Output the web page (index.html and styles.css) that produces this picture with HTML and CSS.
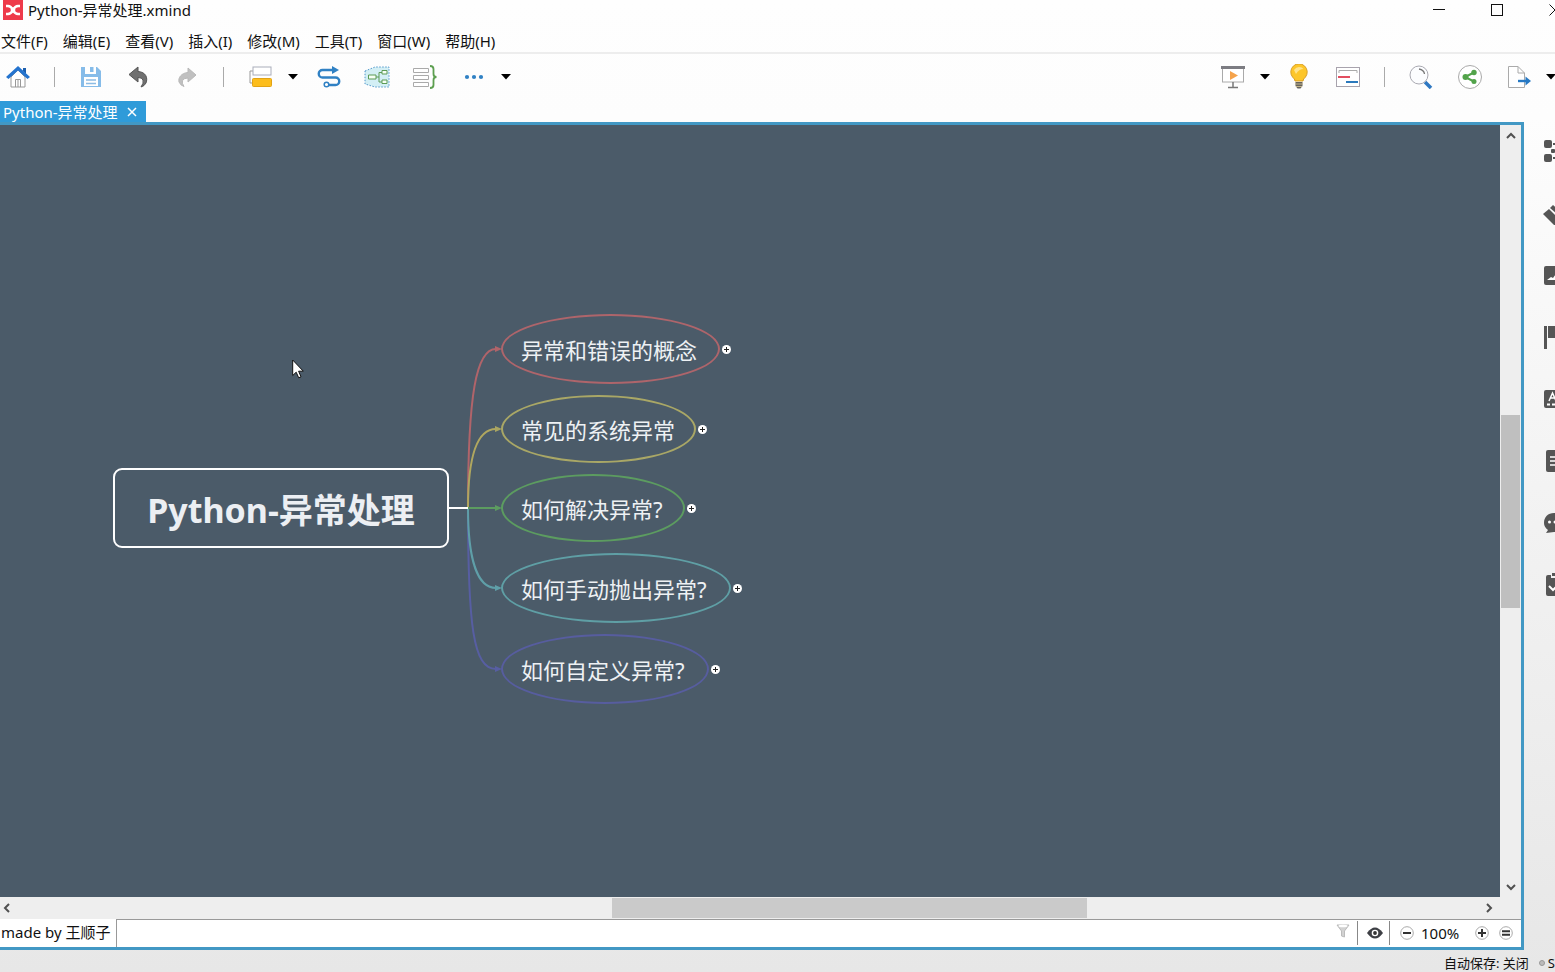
FILE: index.html
```html
<!DOCTYPE html>
<html lang="zh-CN">
<head>
<meta charset="utf-8">
<title>Python-异常处理.xmind</title>
<link rel="stylesheet" href="styles.css">
</head>
<body>
<header class="titlebar">
  <svg class="app-logo" viewBox="0 0 20 20" aria-hidden="true"><rect width="20" height="20" fill="#ee3a4a"/><path d="M3 6H5Q8 6 10 10Q12 14 15 14H17M3 14H5Q8 14 10 10Q12 6 15 6H17" fill="none" stroke="#fff" stroke-width="2.600"/><circle cx="10" cy="10" r="2.400" fill="#fff"/></svg>
  <span class="app-title">Python-异常处理.xmind</span>
  <div class="window-buttons">
    <button aria-label="最小化"><svg width="12" height="12" viewBox="0 0 12 12"><path d="M0 5.500H12" stroke="#111"/></svg></button>
    <button aria-label="最大化"><svg width="12" height="12" viewBox="0 0 12 12"><rect x=".5" y=".5" width="11" height="11" fill="none" stroke="#111"/></svg></button>
    <button aria-label="关闭"><svg width="12" height="12" viewBox="0 0 12 12"><path d="M.5 .5L11.500 11.500M11.500 .5L.5 11.500" stroke="#111"/></svg></button>
  </div>
</header>
<nav class="menubar">
  <button>文件(F)</button><button>编辑(E)</button><button>查看(V)</button><button>插入(I)</button><button>修改(M)</button><button>工具(T)</button><button>窗口(W)</button><button>帮助(H)</button>
</nav>
<div class="toolbar">
  <div class="tools">
    <button class="tool" aria-label="主页"><svg width="24" height="24" viewBox="0 0 24 24"><path d="M5 12V22H19V12L12 5Z" fill="#fff" stroke="#999"/><path d="M9.500 22V14.500H14.500V22M12 14.500V22" fill="none" stroke="#999"/><path d="M17 3H20V9L17 6Z" fill="#1c5fae"/><path d="M0 12L12 1L24 12L21.500 14L12 5.500L2.500 14Z" fill="#2474cf"/></svg></button>
    <span class="sep"></span>
    <button class="tool" aria-label="保存"><svg width="22" height="22" viewBox="0 0 22 22"><path d="M1 1H17L21 5V21H1Z" fill="#86bce9"/><path d="M5 1H16V8H5Z" fill="#fff"/><path d="M10 1H13.500V6H10Z" fill="#86bce9"/><path d="M4 11H18V20H4Z" fill="#fff"/><path d="M6 14H16M6 17.500H16" stroke="#8dbce4" stroke-width="1.500"/></svg></button>
    <button class="tool" aria-label="撤销"><svg width="22" height="22" viewBox="0 0 22 22"><path d="M10 1V5.500C18 6 20 12 18 17Q16.500 20 13 21Q16 17 15 14Q14 11.500 10 11.500V16L1 8.500Z" fill="#707070" stroke="#555"/></svg></button>
    <button class="tool" aria-label="重做"><svg width="20" height="22" viewBox="0 0 20 22"><path d="M11 2V6.500C4 7 1 12 2 16Q3.500 19.500 7 20.500Q4.500 17 5.500 14.500Q7 12 11 12V16L19 9Z" fill="#c0c0c0" stroke="#b8b8b8"/></svg></button>
    <span class="sep"></span>
    <div class="split topic">
      <button class="tool" aria-label="插入主题"><svg width="24" height="22" viewBox="0 0 24 22"><path d="M4 5H1V17H4" fill="none" stroke="#999"/><rect x="4" y="1" width="18" height="8" fill="#fff" stroke="#a9adba"/><rect x="3.500" y="12.500" width="19" height="8" rx="1" fill="#fcbd1c" stroke="#e2a315"/></svg></button>
      <button class="caret" aria-label="更多主题"><svg width="10" height="6" viewBox="0 0 10 6"><path d="M0 0H10L5 5.500Z"/></svg></button>
    </div>
    <button class="tool" aria-label="联系"><svg width="24" height="24" viewBox="0 0 24 24"><path d="M15 5H5.500A3.700 3.700 0 0 0 5.500 12.500H18.500A3.700 3.700 0 0 1 18.500 20H11" fill="none" stroke="#3081c4" stroke-width="2.400"/><path d="M15 1L22 5L15 9Z" fill="#3081c4"/><circle cx="9.500" cy="19.500" r="2.300" fill="#fff" stroke="#3081c4" stroke-width="1.500"/></svg></button>
    <button class="tool" aria-label="外框"><svg width="26" height="22" viewBox="0 0 26 22"><path d="M1 5L11 1H25V21H11L1 18Z" fill="#d3eff5" stroke="#5599cc" stroke-dasharray="1.500 1.500"/><path d="M12 11H15M18 6.500H15V16H18" fill="none" stroke="#5d9b56"/><path d="M4.500 9H12V13H4.500ZM18 4.500H23V8H18ZM18 14H23V17.500H18Z" fill="#f5fff5" stroke="#5d9b56"/></svg></button>
    <button class="tool" aria-label="概要"><svg width="24" height="24" viewBox="0 0 24 24"><path d="M.5 3.500H15.500V7.500H.5ZM.5 10.500H15.500V14.500H.5ZM.5 17.500H15.500V21.500H.5Z" fill="#fff" stroke="#aaa"/><path d="M17 1Q20.500 1 20.500 4V9Q20.500 12 23.500 12Q20.500 12 20.500 15V20Q20.500 23 17 23" fill="none" stroke="#5d9f50" stroke-width="1.800"/></svg></button>
    <div class="split more">
      <button class="tool" aria-label="更多"><svg width="20" height="6" viewBox="0 0 20 6" fill="#3081c4"><circle cx="3" cy="3" r="2.100"/><circle cx="10" cy="3" r="2.100"/><circle cx="17" cy="3" r="2.100"/></svg></button>
      <button class="caret" aria-label="展开更多"><svg width="10" height="6" viewBox="0 0 10 6"><path d="M0 0H10L5 5.500Z"/></svg></button>
    </div>
  </div>
  <div class="tools right">
    <div class="split">
      <button class="tool" aria-label="演示"><svg width="24" height="24" viewBox="0 0 24 24"><rect x="1.500" y="3" width="21" height="14" fill="#fff" stroke="#aaa"/><path d="M0 1H24V4H0Z" fill="#7c7c82"/><path d="M12 17V22M7 22.500H17" stroke="#777" stroke-width="1.500"/><path d="M9 6L17 10.500L9 15Z" fill="#f5a34b"/></svg></button>
      <button class="caret" aria-label="演示选项"><svg width="10" height="6" viewBox="0 0 10 6"><path d="M0 0H10L5 5.500Z"/></svg></button>
    </div>
    <button class="tool" aria-label="头脑风暴"><svg width="20" height="26" viewBox="0 0 20 26"><path d="M6 17Q6 15 3.500 13A8.200 8.200 0 1 1 16.500 13Q14 15 14 17Z" fill="#fdc62a" stroke="#d99f28"/><path d="M5 6Q7 3 10 3Q13 3 14.500 5Q10 5 7 10Z" fill="#ffe38b"/><path d="M6.500 18H13.500V22L11.500 24.500H8.500L6.500 22Z" fill="#66635c"/><path d="M6 20H14M7 22.500H13" stroke="#c3b68d"/></svg></button>
    <button class="tool" aria-label="甘特图"><svg width="26" height="22" viewBox="0 0 26 22"><rect x="1.500" y="1.500" width="23" height="19" fill="#fff" stroke="#a8a3ad"/><path d="M4 7V4.500H22V7" fill="none" stroke="#aaa"/><path d="M3 11H15" stroke="#e24e60" stroke-width="2"/><path d="M11 16H23" stroke="#2b79bc" stroke-width="2"/></svg></button>
    <span class="sep"></span>
    <button class="tool" aria-label="搜索"><svg width="24" height="24" viewBox="0 0 24 24"><path d="M16 17L22 23" stroke="#2f78c2" stroke-width="3.500"/><circle cx="10" cy="10" r="9" fill="#fcfdff" stroke="#a9a9b1"/><path d="M10 4Q15 5 15.500 9" fill="none" stroke="#777" stroke-width="1.300"/></svg></button>
    <button class="tool" aria-label="分享"><svg width="26" height="26" viewBox="0 0 26 26"><circle cx="13" cy="13" r="11.500" fill="#fff" stroke="#aaa"/><path d="M17 8.500L8 13L17 17.500" fill="none" stroke="#52a34a" stroke-width="2"/><g fill="#52a34a"><circle cx="17" cy="8.500" r="2.700"/><circle cx="8.500" cy="13" r="3"/><circle cx="17" cy="17.500" r="2.500"/></g></svg></button>
    <div class="split last">
      <button class="tool" aria-label="导出"><svg width="24" height="24" viewBox="0 0 24 24"><path d="M1.500 1.500H11L17.500 8V22.500H1.500Z" fill="#fff" stroke="#aaa"/><path d="M11 1.500V8H17.500" fill="none" stroke="#aaa"/><path d="M11 16H20" stroke="#2779c4" stroke-width="2.400"/><path d="M18.500 11.500L24 16L18.500 20.500Z" fill="#2779c4"/></svg></button>
      <button class="caret" aria-label="导出选项"><svg width="10" height="6" viewBox="0 0 10 6"><path d="M0 0H10L5 5.500Z"/></svg></button>
    </div>
  </div>
</div>
<div class="workspace">
  <main class="editor">
    <div class="tabs">
      <div class="tab"><span>Python-异常处理</span><button aria-label="关闭标签"><svg width="10" height="10" viewBox="0 0 10 10"><path d="M1 1L9 9M9 1L1 9" stroke="#fff" stroke-width="1.500"/></svg></button></div>
    </div>
    <div class="frame">
      <div class="view">
        <section class="canvas" aria-label="思维导图">
          <svg class="links" width="760" height="600" viewBox="0 0 760 600" fill="none" stroke-width="2">
            <path d="M468 383C468 500 473 544 496 544" stroke="#575ea2"/>
            <path d="M468 383C468 430 476 463 496 463" stroke="#5f9fa8"/>
            <path d="M468 383C468 270 476 224 496 224" stroke="#b0646a"/>
            <path d="M468 383C468 330 477 304 496 304" stroke="#b0a75f"/>
            <path d="M468 383H496" stroke="#5c9c60"/>
            <path d="M449 383H468" stroke="#fff"/>
            <path d="M495 221L502 224L495 227Z" fill="#b0646a"/>
            <path d="M495 301L502 304L495 307Z" fill="#a9a562"/>
            <path d="M495 380L502 383L495 386Z" fill="#5c9c60"/>
            <path d="M495 460L502 463L495 466Z" fill="#5f9fa8"/>
            <path d="M495 541L502 544L495 547Z" fill="#575ea2"/>
          </svg>
          <div class="root">Python-异常处理</div>
          <div class="node n1">异常和错误的概念<button class="expand" aria-label="展开"></button></div>
          <div class="node n2">常见的系统异常<button class="expand" aria-label="展开"></button></div>
          <div class="node n3">如何解决异常?<button class="expand" aria-label="展开"></button></div>
          <div class="node n4">如何手动抛出异常?<button class="expand" aria-label="展开"></button></div>
          <div class="node n5">如何自定义异常?<button class="expand" aria-label="展开"></button></div>
          <svg class="pointer" width="12" height="20" viewBox="0 0 12 20"><path d="M.7 1V16.500L4.200 13.200L6.700 18.800L9 17.800L6.600 12.200H11.300Z" fill="#fff" stroke="#111"/></svg>
        </section>
        <div class="vscroll">
          <button aria-label="向上滚动"><svg width="10" height="7" viewBox="0 0 10 7"><path d="M1 6L5 2L9 6" /></svg></button>
          <div class="track"><div class="thumb"></div></div>
          <button aria-label="向下滚动"><svg width="10" height="7" viewBox="0 0 10 7"><path d="M1 1L5 5L9 1"/></svg></button>
        </div>
      </div>
      <div class="hscroll">
        <button aria-label="向左滚动"><svg width="7" height="10" viewBox="0 0 7 10"><path d="M6 1L2 5L6 9"/></svg></button>
        <div class="track"><div class="thumb"></div></div>
        <button aria-label="向右滚动"><svg width="7" height="10" viewBox="0 0 7 10"><path d="M1 1L5 5L1 9"/></svg></button>
      </div>
      <div class="sheetbar">
        <button class="sheet">made by 王顺子</button>
        <div class="sheet-tools">
          <button class="filter" aria-label="筛选"><svg width="14" height="16" viewBox="0 0 14 16"><path d="M1 2H13L8.500 8V14L5.500 13V8Z" fill="#d2d2d2" stroke="#bbb"/><ellipse cx="7" cy="3" rx="4.500" ry="1.300" fill="#fff"/></svg></button>
          <button class="eye" aria-label="显示"><svg width="16" height="12" viewBox="0 0 16 12"><path d="M0 6Q8-5 16 6Q8 17 0 6Z" fill="#3d3f44"/><circle cx="8" cy="6" r="3.300" fill="#fff"/><circle cx="8" cy="6" r="1.900" fill="#333"/></svg></button>
          <button class="round" aria-label="缩小"><svg width="14" height="14" viewBox="0 0 14 14"><circle cx="7" cy="7" r="6.300"/><path d="M3 7H11"/></svg></button>
          <span class="zoom">100%</span>
          <button class="round plus" aria-label="放大"><svg width="14" height="14" viewBox="0 0 14 14"><circle cx="7" cy="7" r="6.300"/><path d="M3 7H11M7 3V11"/></svg></button>
          <button class="round" aria-label="实际大小"><svg width="14" height="14" viewBox="0 0 14 14"><circle cx="7" cy="7" r="6.300"/><path d="M3 5.300H11M3 8.700H11"/></svg></button>
        </div>
      </div>
    </div>
  </main>
  <aside class="sidebar">
    <button aria-label="结构"><svg width="24" height="24" viewBox="0 0 24 24"><rect x="1" y="1" width="8" height="8" rx="2"/><rect x="1" y="15" width="8" height="8" rx="2"/><rect x="8" y="10" width="4" height="4" rx="1"/><path d="M10 4H12V6H10ZM10 18H12V20H10ZM14 4H22V7H14ZM14 17H22V20H14Z"/></svg></button>
    <button aria-label="格式"><svg width="24" height="24" viewBox="0 0 24 24"><path d="M0 13L6 8L18 20L13 24H11Z"/><path d="M7 7L10 4L22 14V20Z"/></svg></button>
    <button aria-label="图片"><svg width="24" height="24" viewBox="0 0 24 24"><rect x="1" y="3" width="22" height="19" rx="2"/><path d="M4 17L8 14L10 15L15 8L20 17Z" fill="#fff"/></svg></button>
    <button aria-label="图标"><svg width="24" height="24" viewBox="0 0 24 24"><path d="M1 1H4V24H1ZM5 1H23V13H5Z"/></svg></button>
    <button aria-label="文字样式"><svg width="24" height="24" viewBox="0 0 24 24"><rect x="1" y="3" width="22" height="18" rx="2"/><path d="M6 14L9.500 6L13 14M7 11H12" fill="none" stroke="#fff" stroke-width="1.500"/><path d="M4 17.500H7M9 17.500H13" stroke="#fff" stroke-width="2"/></svg></button>
    <button aria-label="备注"><svg width="24" height="24" viewBox="0 0 24 24"><rect x="3" y="1" width="18" height="22" rx="2"/><path d="M7 8H18M7 12H18M7 16H18" stroke="#fff" stroke-width="1.500"/></svg></button>
    <button aria-label="批注"><svg width="24" height="24" viewBox="0 0 24 24"><path d="M11 2C21 2 22 11 22 12C22 19 16 21 11 21L3 22L5 19Q1 16 1 12C1 6 5 2 11 2Z"/><circle cx="6.500" cy="11" r="1.500" fill="#fff"/><circle cx="12" cy="11" r="1.500" fill="#fff"/></svg></button>
    <button aria-label="任务"><svg width="24" height="24" viewBox="0 0 24 24"><path d="M5 2H8V5H16V2H19Q21 2 21 4V21Q21 23 19 23H5Q3 23 3 21V4Q3 2 5 2Z"/><path d="M9 0H15V3H9Z"/><path d="M6 13L10 17L18 9" fill="none" stroke="#fff" stroke-width="2"/></svg></button>
  </aside>
</div>
<footer class="statusbar"><span class="autosave">自动保存: 关闭</span><span class="dot"></span><span class="account">S</span></footer>
</body>
</html>
```
FILE: styles.css
```css
* { box-sizing: border-box; }

body {
  margin: 0;
  height: 100vh;
  display: flex;
  flex-direction: column;
  overflow: hidden;
  color: #111;
  background: linear-gradient(#fefefe 0, #fdfdfd 12%, #f3f3f3 50%, #e7e7e7 100%);
  font: 15px/20px "Noto Sans", "Noto Sans CJK SC", sans-serif;
}

button {
  margin: 0;
  padding: 0;
  border: 0;
  background: none;
  color: inherit;
  font: inherit;
}

svg { display: block; flex: none; }

.titlebar {
  flex: none;
  display: flex;
  align-items: center;
  height: 20px;
  padding-left: 3px;
}
.app-logo { width: 20px; height: 20px; }
.app-title { margin-left: 5px; }
.window-buttons {
  display: flex;
  gap: 46px;
  margin: 0 -6px 0 auto;
}

.menubar {
  flex: none;
  display: flex;
  align-items: flex-start;
  gap: 15px;
  height: 34px;
  padding: 11px 1px 0;
  border-bottom: 2px solid #ededed;
}

.toolbar {
  flex: none;
  display: flex;
  justify-content: space-between;
  height: 47px;
  padding: 0 0 2px 2px;
}
.tools { display: flex; align-items: center; gap: 16px; }
.tools.right { gap: 17px; }
.tool { width: 32px; height: 32px; display: flex; align-items: center; justify-content: center; }
.sep { width: 9px; height: 20px; background: linear-gradient(#aaa, #aaa) center / 1px 100% no-repeat; }
.right .sep { width: 7px; }
.split { display: flex; align-items: center; gap: 12px; }
.split.topic { padding-left: 1px; }
.split.more { padding-left: 1px; }
.right .split { margin-right: -3px; }
.right .split.last { margin-right: 0; }
.caret { width: 8px; height: 32px; display: flex; align-items: center; justify-content: center; }

.workspace { flex: 1; min-height: 0; display: flex; }
.editor { flex: 1; min-width: 0; display: flex; flex-direction: column; }
.tabs { flex: none; display: flex; height: 21px; }
.tab {
  display: flex;
  align-items: center;
  gap: 9px;
  padding: 0 9px 0 3px;
  color: #fff;
  background: #2f9bd9;
}

.frame {
  flex: 1;
  min-height: 0;
  display: flex;
  flex-direction: column;
  border: solid #4298c4;
  border-width: 3px 3px 3px 0;
  background: #eee;
}
.view { flex: 1; min-height: 0; display: flex; }
.canvas { position: relative; flex: 1; overflow: hidden; background: #4b5b69; }
.links { position: absolute; left: 0; top: 0; }

.root {
  position: absolute;
  left: 113px;
  top: 343px;
  width: 336px;
  height: 80px;
  display: flex;
  align-items: center;
  justify-content: center;
  padding-top: 4px;
  border: 2px solid #fff;
  border-radius: 9px;
  color: #eceff3;
  font-size: 34px;
  font-weight: 700;
  line-height: 48px;
  white-space: nowrap;
}

.node {
  position: absolute;
  left: 501px;
  height: 70px;
  display: flex;
  align-items: center;
  padding: 2px 0 0 18px;
  border: 2px solid;
  border-radius: 50%;
  color: #eef1f4;
  font-size: 22px;
  line-height: 32px;
  white-space: nowrap;
}
.n1 { top: 189px; width: 219px; border-color: #ae656b; }
.n2 { top: 270px; width: 195px; height: 68px; border-color: #a9a766; }
.n3 { top: 349px; width: 184px; height: 68px; border-color: #5c9c60; }
.n4 { top: 428px; width: 230px; border-color: #5f9fa5; }
.n5 { top: 509px; width: 208px; border-color: #575d9f; }

.expand {
  position: absolute;
  right: -13px;
  top: 50%;
  width: 9px;
  height: 9px;
  margin-top: -4px;
  border-radius: 50%;
  background:
    linear-gradient(#222, #222) center / 5px 1px no-repeat,
    linear-gradient(#222, #222) center / 1px 5px no-repeat,
    #fff;
}
.pointer { position: absolute; left: 292px; top: 234px; }

.vscroll, .hscroll { display: flex; flex: none; background: #eee; }
.vscroll { flex-direction: column; width: 21px; padding: 0 1px; }
.hscroll { height: 22px; padding: 1px 22px 1px 0; }
.vscroll button, .hscroll button { flex: none; display: flex; align-items: center; justify-content: center; }
.vscroll button { height: 20px; }
.hscroll button { width: 20px; padding-right: 7px; }
.hscroll button:last-child { padding-right: 0; }
.vscroll path, .hscroll path { fill: none; stroke: #505050; stroke-width: 2; }
.track { flex: 1; position: relative; }
.thumb { position: absolute; background: #c4c4c4; }
.vscroll .thumb { left: 0; right: 0; top: 36.9%; height: 26.4%; background: #bfbfbf; }
.hscroll .thumb { top: 0; bottom: 0; left: 40.6%; width: 32.5%; background: #cacaca; }

.sheetbar { flex: none; display: flex; height: 28px; background: #fff; }
.sheet { padding: 0 5px 2px 1px; border-right: 1px solid #999; }
.sheet-tools {
  flex: 1;
  display: flex;
  justify-content: flex-end;
  align-items: center;
  padding: 0 8px 1px 0;
  border-top: 1px solid #999;
}
.filter { padding: 0 7px 4px 0; }
.eye { height: 24px; margin-right: 10px; padding: 0 6px 0 9px; border: solid #888; border-width: 0 1px; }
.round circle { fill: #fff; stroke: #aaa; }
.round path { fill: none; stroke: #333; stroke-width: 2; }
.zoom { width: 54px; margin-left: 7px; }
.plus { margin-right: 10px; }

.sidebar {
  flex: none;
  width: 31px;
  display: flex;
  flex-direction: column;
  gap: 38px;
  padding: 38px 0 0 19px;
  overflow: hidden;
}
.sidebar button { width: 24px; height: 24px; }
.sidebar svg { fill: #555; }

.statusbar {
  flex: none;
  display: flex;
  align-items: center;
  justify-content: flex-end;
  height: 22px;
  padding-top: 3px;
  overflow: hidden;
  font-size: 13px;
}
.dot { width: 6px; height: 6px; margin: 0 3px 0 10px; border: 1px solid #999; border-radius: 50%; background: #bbb; }
```
